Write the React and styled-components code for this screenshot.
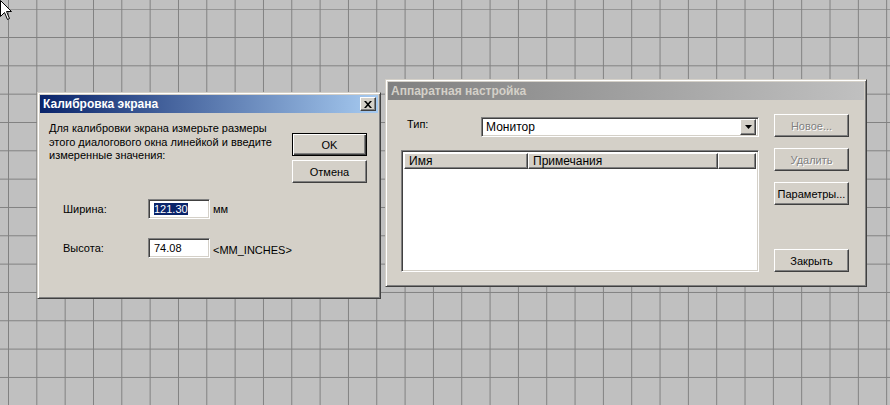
import React from 'react';
import styled, { createGlobalStyle, css } from 'styled-components';

const GlobalStyle = createGlobalStyle`
  html, body {
    margin:0;
    padding:0;
  }
  body {
    font-family:"Liberation Sans", Arial, sans-serif;
    font-size:11px;
    color:#000;
  }
`;

const GRID = '28.34px';

const Desktop = styled.div`
  position:relative;
  width:890px;
  height:405px;
  overflow:hidden;
  background-color:#c0c0c0;
  background-image:linear-gradient(to right, #808080 1px, transparent 1px);
  background-size:${GRID} ${GRID};
  background-position:8px 0;

  &::before {
    content:'';
    position:absolute;
    left:0;
    right:0;
    top:9px;
    bottom:0;
    background-image:linear-gradient(to bottom, #808080 1px, transparent 1px);
    background-size:${GRID} ${GRID};
    background-position:0 28px;
  }
`;

const raised = css`
  border:1px solid;
  border-color:#fff #404040 #404040 #fff;
  box-shadow:inset -1px -1px #808080;
`;

const sunken = css`
  border:1px solid;
  border-color:#808080 #fff #fff #808080;
  box-shadow:inset 1px 1px #404040, inset -1px -1px #d4d0c8;
`;

const Window = styled.div`
  position:absolute;
  left:${p => p.x}px;
  top:${p => p.y}px;
  width:${p => p.w}px;
  height:${p => p.h}px;
  box-sizing:border-box;
  background:#d4d0c8;
  border:1px solid;
  border-color:#d4d0c8 #404040 #404040 #d4d0c8;
  box-shadow:inset 1px 1px #fff, inset -1px -1px #808080;
  padding:2px;
  display:flex;
  flex-direction:column;
`;

const TitleBar = styled.div`
  height:18px;
  flex:none;
  display:flex;
  align-items:center;
  justify-content:space-between;
  padding:0 2px 0 3px;
  background:${p => p.active
    ? 'linear-gradient(to right, #0a246a, #a6caf0)'
    : 'linear-gradient(to right, #808080, #c0c0c0)'};
  color:${p => p.active ? '#fff' : '#d4d0c8'};
  font-weight:bold;
  font-size:12px;
  white-space:nowrap;
`;

const CloseBox = styled.div`
  width:16px;
  height:14px;
  box-sizing:border-box;
  background:#d4d0c8;
  ${raised};
  display:flex;
  align-items:center;
  justify-content:center;
`;

const Button = styled.div`
  width:75px;
  height:23px;
  box-sizing:border-box;
  background:#d4d0c8;
  display:flex;
  align-items:center;
  justify-content:center;
  font-size:11px;
  white-space:nowrap;
  ${p => p.primary
    ? css`
      border:1px solid #000;
      box-shadow:inset 1px 1px #fff, inset -1px -1px #404040, inset -2px -2px #808080;
    `
    : raised};
  ${p => p.disabled && css`
    color:#808080;
    text-shadow:1px 1px #fff;
  `}
  ${p => p.push && css`margin-top:auto;`}
`;

const CalBody = styled.div`
  flex:1;
  padding:8px 11px 0 9px;
`;

const CalTop = styled.div`
  display:grid;
  grid-template-columns:1fr 75px;
`;

const Prompt = styled.div`
  line-height:13.5px;
  padding-top:1px;
`;

const ButtonColumn = styled.div`
  display:flex;
  flex-direction:column;
  gap:${p => p.gap || 4}px;
  padding-top:${p => p.top || 0}px;
`;

const Fields = styled.div`
  display:grid;
  grid-template-columns:85px 62px auto;
  grid-auto-rows:20px;
  row-gap:19px;
  align-items:center;
  margin:16px 0 0 14px;
`;

const Label = styled.div`
  white-space:nowrap;
`;

const Input = styled.div`
  height:20px;
  box-sizing:border-box;
  background:#fff;
  ${sunken};
  display:flex;
  align-items:center;
  padding:0 4px 0 5px;
`;

const Selected = styled.span`
  background:#0a246a;
  color:#fff;
  line-height:12px;
`;

const Unit = styled.div`
  padding-left:3px;
  white-space:nowrap;
  margin-top:${p => p.low ? 3 : 0}px;
`;

const HwBody = styled.div`
  flex:1;
  display:grid;
  grid-template-columns:358px 75px;
  column-gap:15px;
  padding:14px 0 12px 13px;
`;

const LeftPane = styled.div`
  display:flex;
  flex-direction:column;
  padding-top:3px;
`;

const TypeRow = styled.div`
  display:flex;
  align-items:flex-start;
  height:20px;
`;

const TypeLabel = styled.div`
  width:74px;
  padding-left:6px;
  padding-top:1px;
`;

const Combo = styled.div`
  flex:1;
  box-sizing:border-box;
  height:20px;
  background:#fff;
  ${sunken};
  display:flex;
  align-items:center;
  padding:2px 2px 2px 4px;
  font-size:12px;
`;

const ComboText = styled.div`
  flex:1;
`;

const DropButton = styled.div`
  width:16px;
  height:16px;
  box-sizing:border-box;
  background:#d4d0c8;
  ${raised};
  display:flex;
  align-items:center;
  justify-content:center;
`;

const ListView = styled.div`
  margin-top:13px;
  flex:1;
  box-sizing:border-box;
  background:#fff;
  ${sunken};
  padding:2px;
  display:flex;
  flex-direction:column;
`;

const Header = styled.div`
  display:grid;
  grid-template-columns:124px 190px 1fr;
  height:16px;
`;

const HeaderCell = styled.div`
  box-sizing:border-box;
  background:#d4d0c8;
  ${raised};
  padding-left:4px;
  display:flex;
  align-items:center;
  font-size:12px;
  white-space:nowrap;
`;

const Cursor = styled.svg`
  position:absolute;
  left:0;
  top:0;
  z-index:5;
`;

export default function App() {
  return (
    <Desktop>
      <GlobalStyle />

      <Window x={37} y={92} w={344} h={207}>
        <TitleBar active>
          <span>Калибровка экрана</span>
          <CloseBox>
            <svg width="8" height="7" viewBox="0 0 8 7">
              <path d="M0 0h2l2 2.2 2-2.2h2L5 3.5 8 7H6L4 4.8 2 7H0l3-3.5z" fill="#000" />
            </svg>
          </CloseBox>
        </TitleBar>
        <CalBody>
          <CalTop>
            <Prompt>
              Для калибровки экрана измерьте размеры<br />
              этого диалогового окна линейкой и введите<br />
              измеренные значения:
            </Prompt>
            <ButtonColumn top={12}>
              <Button primary>OK</Button>
              <Button>Отмена</Button>
            </ButtonColumn>
          </CalTop>
          <Fields>
            <Label>Ширина:</Label>
            <Input><Selected>121.30</Selected></Input>
            <Unit>мм</Unit>
            <Label>Высота:</Label>
            <Input>74.08</Input>
            <Unit low>&lt;MM_INCHES&gt;</Unit>
          </Fields>
        </CalBody>
      </Window>

      <Window x={385} y={79} w={482} h={208}>
        <TitleBar>
          <span>Аппаратная настройка</span>
        </TitleBar>
        <HwBody>
          <LeftPane>
            <TypeRow>
              <TypeLabel>Тип:</TypeLabel>
              <Combo>
                <ComboText>Монитор</ComboText>
                <DropButton>
                  <svg width="7" height="4" viewBox="0 0 7 4">
                    <path d="M0 0h7L3.5 4z" fill="#000" />
                  </svg>
                </DropButton>
              </Combo>
            </TypeRow>
            <ListView>
              <Header>
                <HeaderCell>Имя</HeaderCell>
                <HeaderCell>Примечания</HeaderCell>
                <HeaderCell />
              </Header>
            </ListView>
          </LeftPane>
          <ButtonColumn gap={11}>
            <Button disabled>Новое...</Button>
            <Button disabled>Удалить</Button>
            <Button>Параметры...</Button>
            <Button push>Закрыть</Button>
          </ButtonColumn>
        </HwBody>
      </Window>

      <Cursor width="13" height="21" viewBox="0 0 13 21">
        <path d="M0.5 0.5V16.5L4.5 12.5L7.5 19.5L9.5 18.5L6.5 11.5H11.5Z" fill="#fff" stroke="#000" strokeWidth="1" />
      </Cursor>
    </Desktop>
  );
}
